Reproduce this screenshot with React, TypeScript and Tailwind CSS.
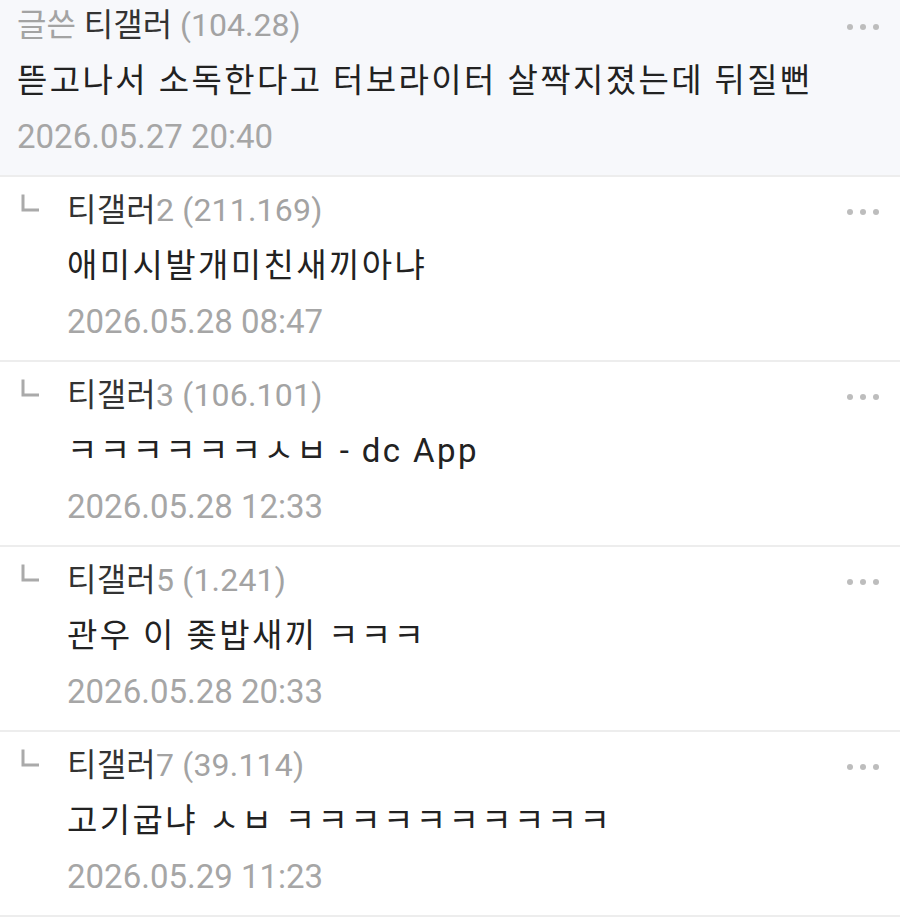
import React from "react";

const font = { fontFamily: 'Roboto, "Noto Sans CJK KR", sans-serif' };

function Dots() {
  return (
    <div className="flex items-center gap-[7px] pr-[21px] pt-[4px]">
      <span className="w-[6px] h-[6px] rounded-full bg-[#bdbdbd]" />
      <span className="w-[6px] h-[6px] rounded-full bg-[#bdbdbd]" />
      <span className="w-[6px] h-[6px] rounded-full bg-[#bdbdbd]" />
    </div>
  );
}

function ReplyIcon() {
  return (
    <svg width="20" height="20" viewBox="0 0 20 20" className="shrink-0">
      <path d="M3 1.5 V17 H19" fill="none" stroke="#aaaaaa" strokeWidth="3" />
    </svg>
  );
}

type Reply = { suffix: string; ip: string; text: string; date: string };

const replies: Reply[] = [
  { suffix: "2", ip: "(211.169)", text: "애미시발개미친새끼아냐", date: "2026.05.28 08:47" },
  { suffix: "3", ip: "(106.101)", text: "ㅋㅋㅋㅋㅋㅋㅅㅂ - dc App", date: "2026.05.28 12:33" },
  { suffix: "5", ip: "(1.241)", text: "관우 이 좆밥새끼 ㅋㅋㅋ", date: "2026.05.28 20:33" },
  { suffix: "7", ip: "(39.114)", text: "고기굽냐 ㅅㅂ ㅋㅋㅋㅋㅋㅋㅋㅋㅋㅋ", date: "2026.05.29 11:23" },
];

export default function App() {
  return (
    <div className="w-[900px] h-[923px] bg-white overflow-hidden" style={font}>
      <div className="bg-[#f7f8fb] pl-[17px] pb-[10px]">
        <div className="flex justify-between items-center h-[50px]">
          <div className="text-[32px] leading-[50px] whitespace-nowrap">
            <span className="text-[#a3a3a3]">글쓴</span>{" "}
            <span className="text-[#333333]">티갤러</span>{" "}
            <span className="text-[#a3a3a3]">(104.28)</span>
          </div>
          <Dots />
        </div>
        <div className="mt-[3px] text-[33px] leading-[56px] tracking-[2.4px] text-[#222222] whitespace-nowrap">
          뜯고나서 소독한다고 터보라이터 살짝지졌는데 뒤질뻔
        </div>
        <div className="text-[33px] leading-[56px] text-[#a6a6a6]">2026.05.27 20:40</div>
      </div>
      <div className="h-[2px] bg-[#ededed]" />
      {replies.map((r, i) => (
        <React.Fragment key={i}>
          <div className="flex pt-[5px] pb-[10px] pl-[20px]">
            <div className="pt-[11px] w-[47px]">
              <ReplyIcon />
            </div>
            <div className="flex-1 flex flex-col">
              <div className="flex justify-between items-center h-[56px]">
                <div className="text-[32px] leading-[56px] tracking-[0.2px] whitespace-nowrap">
                  <span className="text-[#333333]">티갤러</span>
                  <span className="text-[#a3a3a3]">{r.suffix} {r.ip}</span>
                </div>
                <Dots />
              </div>
              <div className="text-[33px] leading-[56px] tracking-[2.4px] text-[#222222] whitespace-nowrap">{r.text}</div>
              <div className="text-[33px] leading-[56px] text-[#a6a6a6]">{r.date}</div>
            </div>
          </div>
          <div className="h-[2px] bg-[#ededed]" />
        </React.Fragment>
      ))}
    </div>
  );
}
